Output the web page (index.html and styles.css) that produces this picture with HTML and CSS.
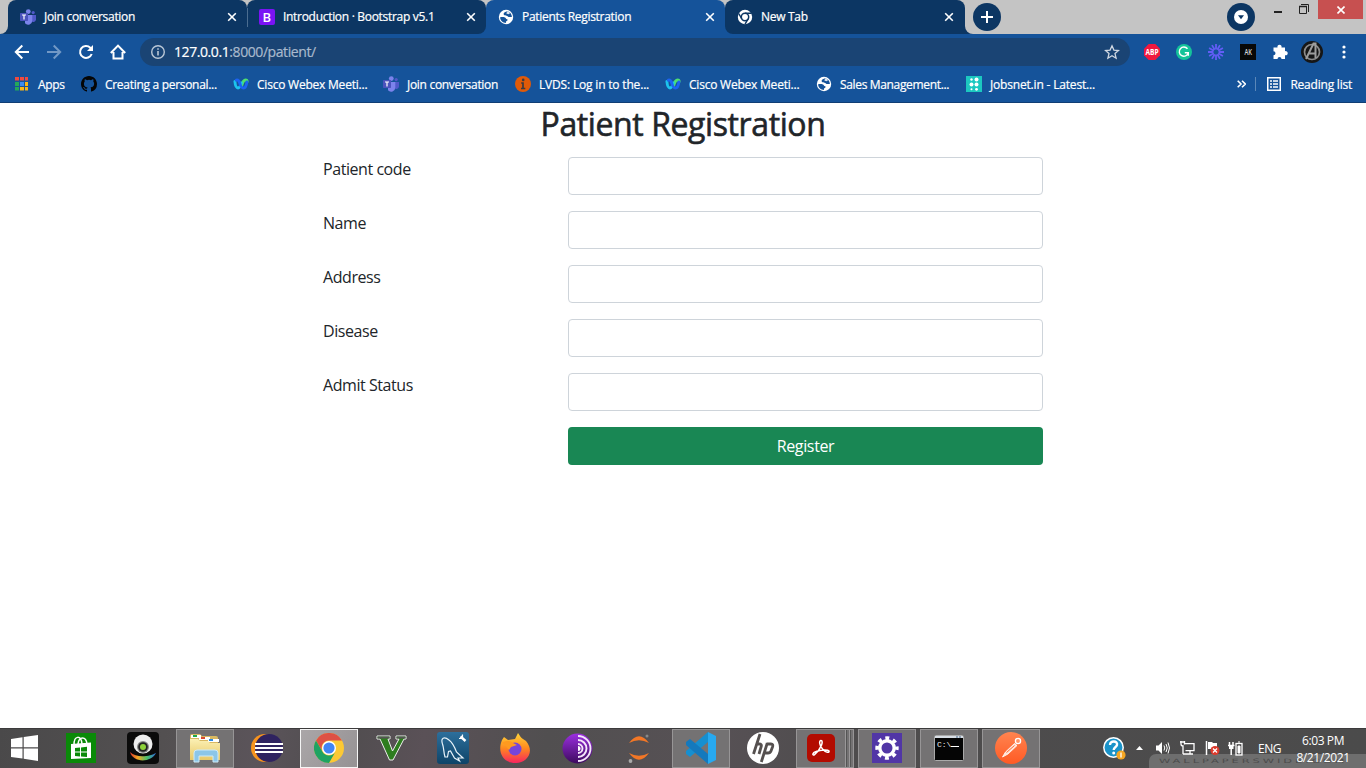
FILE: index.html
```
<!DOCTYPE html>
<html lang="en">
<head>
<meta charset="utf-8">
<title>Patients Registration</title>
<link rel="stylesheet" href="styles.css">
</head>
<body>
<svg class="defs" width="0" height="0">
  <defs>
    <linearGradient id="gFolder" x1="0" y1="0" x2="0" y2="1"><stop offset="0" stop-color="#fbf0b4"/><stop offset="1" stop-color="#e8c867"/></linearGradient>
    <linearGradient id="gFox" x1="0" y1="0" x2="0" y2="1"><stop offset="0" stop-color="#ffd53a"/><stop offset=".5" stop-color="#ff8a1e"/><stop offset="1" stop-color="#f8245f"/></linearGradient>
    <linearGradient id="gTor" x1="0" y1="0" x2="0" y2="1"><stop offset="0" stop-color="#9b2fe0"/><stop offset="1" stop-color="#3d0a5e"/></linearGradient>
    <linearGradient id="gSql" x1="0" y1="0" x2="0" y2="1"><stop offset="0" stop-color="#2d6f9c"/><stop offset="1" stop-color="#0e4468"/></linearGradient>
    <linearGradient id="gPost" x1="0" y1="0" x2="0" y2="1"><stop offset="0" stop-color="#ff8450"/><stop offset="1" stop-color="#ff5a24"/></linearGradient>
    <linearGradient id="gCam" x1="0" y1="0" x2="1" y2="0"><stop offset="0" stop-color="#d8332a"/><stop offset=".3" stop-color="#f7a823"/><stop offset=".65" stop-color="#4cc06a"/><stop offset="1" stop-color="#2f6fe0"/></linearGradient>
    <symbol id="teams" viewBox="0 0 16 16">
      <circle cx="8.3" cy="2.6" r="2.4" fill="#7b83eb"/><circle cx="13.2" cy="3.6" r="1.6" fill="#5059c9"/>
      <path d="M11 6h5v4.500a2.700 2.700 0 0 1-5 1.200z" fill="#5059c9"/>
      <path d="M5 6h7.300v5.500a4.200 4.200 0 0 1-7.300 2.800z" fill="#7b83eb"/>
      <rect x="0" y="4" width="8" height="8" rx=".7" fill="#4b53bc"/>
      <path d="M2 6h4M4 6v4.500" stroke="#fff" stroke-width="1.200" fill="none"/>
    </symbol>
    <symbol id="globe" viewBox="0 0 16 16">
      <circle cx="8" cy="8" r="7.200" fill="#fff"/>
      <path d="M9.200 2.200C7.500 2.600 5.600 3.600 5.600 5c0 1.700 3 1.200 4 2.200.8.900 2.200 1 4.300.8C13.900 5 11.800 2.700 9.200 2.200z" fill="#15539a"/>
      <path d="M2.100 8.200c1.800-.2 4.300-.6 5.300.5.700.8.600 1.400 1.600 1.500 1 .2.700 1.400-.2 1.700-1 .3-1 1.300-.7 2-3.400 0-5.900-2.600-6-5.700z" fill="#15539a"/>
      <path d="M9.300 2.300 8.300 4.400 10.500 5.200 12 4.300 11.200 3z" fill="#fff" opacity=".85"/>
    </symbol>
    <symbol id="webex" viewBox="0 0 16 16">
      <path d="M8.500 10C9.500 6.500 10.300 4 12.500 4c1.300 0 1.600.7 1.600 1.500" fill="none" stroke="#4fe070" stroke-width="3" stroke-linecap="round"/>
      <path d="M1.900 5.500C2.200 9 3 12 5 12s2.600-2.700 3.300-5" fill="none" stroke="#1cc4ee" stroke-width="2.900" stroke-linecap="round"/>
      <path d="M3.300 4.200C5 3.600 6 4.600 6.700 7c.8 3 1.700 5 3.800 5 2 0 3-3 3.400-6" fill="none" stroke="#1c63f2" stroke-width="2.900" stroke-linecap="round"/>
    </symbol>
    <symbol id="close" viewBox="0 0 10 10"><path d="M1.200 1.200l7.600 7.600M8.800 1.200L1.200 8.800" stroke="#fff" stroke-width="1.600"/></symbol>
  </defs>
</svg>

<header class="browser">
  <div class="tabstrip">
    <div class="lead"></div>
    <div class="tab first"><svg class="fav"><use href="#teams"/></svg><span>Join conversation</span><svg class="x"><use href="#close"/></svg></div>
    <div class="joint"><div class="tab second"><svg class="fav" viewBox="0 0 16 16"><rect width="16" height="16" rx="2" fill="#7a13f5"/><text x="3.400" y="12.700" font-size="13" font-weight="600" fill="#fff">B</text></svg><span>Introduction · Bootstrap v5.1</span><svg class="x"><use href="#close"/></svg></div></div>
    <div class="tab active"><svg class="fav"><use href="#globe"/></svg><span>Patients Registration</span><svg class="x"><use href="#close"/></svg></div>
    <div class="joint"><div class="tab last"><svg class="fav" viewBox="0 0 16 16"><circle cx="8" cy="8" r="7.200" fill="#fff"/><circle cx="8" cy="8" r="3.700" fill="none" stroke="#0c3663" stroke-width="1.500"/><path d="M8 4.300h6.500M4.800 9.800 1.700 4.500M11.200 9.900 8 15.200" stroke="#0c3663" stroke-width="1.400"/></svg><span>New Tab</span><svg class="x"><use href="#close"/></svg></div></div>
    <div class="trail"></div>
    <div class="round plus"><svg width="12" height="12"><path d="M6 0v12M0 6h12" stroke="#fff" stroke-width="2"/></svg></div>
    <div class="round search"><svg width="14" height="14"><circle cx="7" cy="7" r="7" fill="#fff"/><path d="M4 5.200h6L7 9.200z" fill="#0c3663"/></svg></div>
    <div class="winctl">
      <svg class="min" width="8" height="2"><rect width="8" height="2" fill="#222"/></svg>
      <svg class="restore" width="10" height="10"><path d="M.5 2.500h7v7h-7zM2 .5h7.500V8" fill="none" stroke="#222"/><path d="M0 2.500h8" stroke="#222" stroke-width="1.500"/></svg>
      <div class="shut"><svg width="8" height="8"><path d="M.5.5l7 7M7.500.5l-7 7" stroke="#fff" stroke-width="1.600"/></svg></div>
    </div>
  </div>

  <div class="toolbar">
    <div class="nav">
      <svg width="16" height="16"><path d="M15 8H2M8.300 1.500 1.800 8l6.500 6.500" fill="none" stroke="#fff" stroke-width="2"/></svg>
      <svg width="16" height="16"><path d="M1 8h13M7.700 1.500 14.200 8l-6.500 6.500" fill="none" stroke="#7298c5" stroke-width="2"/></svg>
      <svg width="16" height="16"><path d="M13.700 10A6 6 0 1 1 12.300 3.700l2 2" fill="none" stroke="#fff" stroke-width="2"/><path d="M15 1v6H9z" fill="#fff"/></svg>
      <svg width="16" height="16"><path d="M3.500 8v6.500h9V8M.8 9 8 1.600 15.200 9" fill="none" stroke="#fff" stroke-width="2"/></svg>
    </div>
    <div class="omnibox">
      <svg width="16" height="16"><circle cx="8" cy="8" r="6.300" fill="none" stroke="#bac7d6" stroke-width="1.400"/><path d="M8 7v4.500M8 4.200v1.600" stroke="#bac7d6" stroke-width="1.600"/></svg>
      <span class="url">127.0.0.1<i>:8000/patient/</i></span>
      <svg class="star" width="16" height="16"><path d="M8 1.800l1.900 4.300 4.600.4-3.500 3.100 1.100 4.600L8 11.800l-4.100 2.400L5 9.600 1.500 6.500l4.600-.4z" fill="none" stroke="#d0d8e2" stroke-width="1.300"/></svg>
    </div>
    <div class="exts">
      <svg class="abp" viewBox="0 0 16 16"><path d="M4.700 0h6.600L16 4.700v6.600L11.300 16H4.700L0 11.300V4.700z" fill="#f0183f"/><text x="1.500" y="10.800" font-size="8" font-weight="700" fill="#fff" textLength="13" lengthAdjust="spacingAndGlyphs">ABP</text></svg>
      <svg viewBox="0 0 16 16"><circle cx="8" cy="8" r="8" fill="#15c39a"/><path d="M11.500 4.800A4.600 4.600 0 1 0 12.300 9M8.800 8.700h3.500v3" fill="none" stroke="#fff" stroke-width="1.400"/></svg>
      <svg viewBox="0 0 16 16"><path d="M8 0v5.500M8 10.500V16M0 8h5.500M10.500 8H16M4 1.100l2.700 4.700M9.300 10.200l2.700 4.700M12 1.100 9.300 5.800M6.700 10.200 4 14.900M1.100 4l4.700 2.700M10.200 9.300l4.700 2.700M1.100 12l4.700-2.700M10.200 6.700 14.900 4" stroke="#625df5" stroke-width="1.800"/></svg>
      <svg viewBox="0 0 16 16"><rect width="16" height="16" fill="#080808"/><text x="4.400" y="11" font-size="8" font-weight="600" fill="#ddd" textLength="7.500" lengthAdjust="spacingAndGlyphs">AK</text></svg>
      <svg viewBox="0 0 16 16"><path d="M1.500 3.500h4a2.100 2.100 0 1 1 4 0H13v3.700a2.100 2.100 0 1 1 0 4V15H9.500a2 2 0 0 0-4 0h-4v-3.800a2 2 0 1 0 0-4z" fill="#fff"/></svg>
      <svg class="avatar" viewBox="0 0 22 22"><circle cx="11" cy="11" r="11" fill="#161616"/><circle cx="11" cy="11" r="7.500" fill="none" stroke="#8b8b8b" stroke-width="1.700"/><path d="M5 18 12.500 2.500h2V17M8 12.500h6" fill="none" stroke="#9d9d9d" stroke-width="2"/></svg>
      <svg class="dots" viewBox="0 0 4 16"><circle cx="2" cy="3" r="1.600" fill="#fff"/><circle cx="2" cy="8" r="1.600" fill="#fff"/><circle cx="2" cy="13" r="1.600" fill="#fff"/></svg>
    </div>
  </div>

  <nav class="bookmarks">
    <a><svg viewBox="0 0 16 16"><path d="M1 1h4v3.500H1zM6 1h4v3.500H6zM11 1h3v3.500h-3z" fill="#ef4a40"/><path d="M1 6h4v4H1zM1 11h4v3.500H1z" fill="#24a85a"/><path d="M6 6h4v4H6z" fill="#3b8bf0"/><path d="M11 6h3v4h-3zM6 11h4v3.500H6zM11 11h3v3.500h-3z" fill="#f8b516"/></svg><span class="b0">Apps</span></a>
    <a><svg viewBox="0 0 16 16"><path fill="#050505" d="M8 0C3.580 0 0 3.580 0 8c0 3.540 2.290 6.530 5.470 7.590.4.070.55-.17.55-.38 0-.19-.01-.82-.01-1.490-2.010.37-2.530-.49-2.690-.94-.09-.23-.48-.94-.82-1.130-.28-.15-.68-.52-.01-.53.63-.01 1.080.58 1.230.82.72 1.210 1.870.87 2.330.66.07-.52.28-.87.51-1.070-1.780-.2-3.640-.89-3.640-3.950 0-.87.31-1.590.82-2.150-.08-.2-.36-1.020.08-2.120 0 0 .67-.21 2.200.82a7.600 7.600 0 0 1 4 0c1.530-1.040 2.200-.82 2.200-.82.44 1.100.16 1.920.08 2.120.51.56.82 1.270.82 2.150 0 3.070-1.870 3.750-3.650 3.950.29.25.54.73.54 1.480 0 1.070-.01 1.930-.01 2.200 0 .21.15.46.55.38A8.010 8.010 0 0 0 16 8c0-4.420-3.580-8-8-8z"/></svg><span class="b1">Creating a personal...</span></a>
    <a><svg><use href="#webex"/></svg><span class="b2">Cisco Webex Meeti...</span></a>
    <a><svg><use href="#teams"/></svg><span class="b3">Join conversation</span></a>
    <a><svg viewBox="0 0 16 16"><circle cx="8" cy="8" r="8" fill="#e05a08"/><path d="M8 6.500v6M6.200 7h2.500M6 12.500h4.300" stroke="#3b3a40" stroke-width="1.700"/><circle cx="8.200" cy="3.900" r="1.300" fill="#3b3a40"/></svg><span class="b4">LVDS: Log in to the...</span></a>
    <a><svg><use href="#webex"/></svg><span class="b5">Cisco Webex Meeti...</span></a>
    <a><svg><use href="#globe"/></svg><span class="b6">Sales Management...</span></a>
    <a><svg viewBox="0 0 16 16"><rect width="16" height="16" fill="#1cc8c0"/><g fill="#fff"><circle cx="5.500" cy="3.500" r="1.200"/><circle cx="10.500" cy="3.500" r="2"/><circle cx="5.500" cy="8.500" r="2"/><circle cx="10.500" cy="8.500" r="2"/><circle cx="5.500" cy="13.300" r="1"/><circle cx="10.500" cy="13.300" r="1.400"/></g></svg><span class="b7">Jobsnet.in - Latest...</span></a>
    <div class="right">
      <svg class="more" viewBox="0 0 9 8"><path d="M.7.7 4 4 .7 7.300M5 .7 8.300 4 5 7.300" fill="none" stroke="#fff" stroke-width="1.600"/></svg>
      <svg class="list" viewBox="0 0 14 14"><rect x=".75" y=".75" width="12.500" height="12.500" fill="none" stroke="#fff" stroke-width="1.500"/><path d="M3 4h2M6 4h5M3 7h2M6 7h5M3 10h2M6 10h5" stroke="#fff" stroke-width="1.500"/></svg>
      <span class="b8">Reading list</span>
    </div>
  </nav>
</header>

<main class="page">
  <h2>Patient Registration</h2>
  <form class="form">
    <label>Patient code</label><input type="text">
    <label>Name</label><input type="text">
    <label>Address</label><input type="text">
    <label>Disease</label><input type="text">
    <label>Admit Status</label><input type="text">
    <button type="button">Register</button>
  </form>
</main>

<footer class="taskbar">
  <div class="start"><svg width="27" height="26" viewBox="0 0 27 26"><path d="M0 4 11.500 2.200V12.300H0zM12.700 2 27 0V12.300H12.700zM0 13.500h11.500v10L0 21.900zM12.700 13.500H27V26l-14.300-2.200z" fill="#fff"/></svg></div>
  <div class="app"><svg width="30" height="30"><rect width="30" height="30" fill="#0a8a08"/><path d="M5 12l20-1.500V26L5 27z" fill="#fff" transform="translate(0 -1)"/><path d="M8 12C8 2 15 2 16 11M12 11C13 3 20 3 21 11" fill="none" stroke="#fff" stroke-width="1.500"/><path d="M9 15l5-.5v4H9zM15 14.400l6-.6v4.700h-6zM9 19.500h5v4l-5-.4zM15 19.500h6v4.400l-6-.4z" fill="#0a8a08"/></svg></div>
  <div class="app"><svg width="32" height="32"><rect width="32" height="32" rx="4" fill="#0b0b0b"/><path d="M3 20c3 11 21 11 26 1-5 3-19 6-26-1z" fill="url(#gCam)"/><circle cx="16" cy="12" r="9.500" fill="#eee"/><circle cx="16" cy="15" r="6" fill="#888"/><circle cx="16" cy="15" r="4.800" fill="#222"/><circle cx="16" cy="15" r="3" fill="#8dd13a"/></svg></div>
  <div class="app open"><svg width="32" height="30"><path d="M1 3q0-2 2-2h8l2 2h14q2 0 2 2v20H1z" fill="#d8b861"/><path d="M2 2h10v3H2z" fill="#fff"/><path d="M4 2h4v2H4z" fill="#20a84a"/><path d="M10 4h11v3H10z" fill="#fff"/><path d="M12 4h4v2h-4z" fill="#d84a32"/><path d="M19 6h11v3H19z" fill="#fff"/><path d="M20 6h4v2h-4z" fill="#2d8be0"/><path d="M1 6h8l2 2h8l2 2h10v17H1z" fill="url(#gFolder)"/><path d="M5 29V20q0-3 3-3h18q3 0 3 3v9h-5v-6H10v6z" fill="#8cc6e8" stroke="#cdeaf8"/></svg></div>
  <div class="app"><svg width="32" height="30"><circle cx="14" cy="15" r="14" fill="#f7941e"/><circle cx="18" cy="15" r="14" fill="#2f2360"/><path d="M4 11h28M4 15h28M4 19h28" stroke="#fff" stroke-width="2"/></svg></div>
  <div class="app focus"><svg width="30" height="30" viewBox="0 0 30 30"><circle cx="15" cy="15" r="15" fill="#fcc934"/><path d="M2 7.500A15 15 0 0 1 28 7.500H15a7.500 7.500 0 0 0-6.500 11.200z" fill="#de5145"/><path d="M2 7.500A15 15 0 0 0 15 30l6.500-11.300a7.500 7.500 0 0 1-13 0z" fill="#1ea362"/><circle cx="15" cy="15" r="7" fill="#fff"/><circle cx="15" cy="15" r="5.600" fill="#4285f4"/></svg></div>
  <div class="app"><svg width="31" height="26"><path d="M1 1h13v3h-2l4.500 12L23 4h-3V1h10v3h-2L17 25h-3.500L4 4H1z" fill="#2e7d1f" stroke="#eee" stroke-width="1"/><path d="M1.500 1.500h12v2h-12zM20.500 1.500h9v2h-9z" fill="#555"/></svg></div>
  <div class="app"><svg width="32" height="32"><rect width="32" height="32" rx="3" fill="url(#gSql)"/><path d="M8 25C6.500 20 7 16 5.500 12 3.500 6 7 4 12 8c4 3 6 8 7.500 12l6.500 6h-5l1.500 3-5-3-4-7-2 .5-1 5.500z" fill="none" stroke="#e8f3fa" stroke-width="1.200"/><path d="M23.500 4.500l5 4.500" stroke="#fff" stroke-width="2.400" fill="none"/><path d="M25.500 2.500v4h-3.500" stroke="#fff" stroke-width="1.200" fill="none"/></svg></div>
  <div class="app"><svg width="32" height="32"><path d="M3 8 5 5l4 3 7-1 3-6c2 3 3 5 5 6l3 2c10 12-1 23-11 22C4 31-2 20 3 8z" fill="url(#gFox)"/><circle cx="16" cy="17" r="6.500" fill="#7645d9"/><path d="M3 11c4-3 9-2 11 0l4 2-6 2-2 3c-2-2-2-4-7-7z" fill="#ff9a1f"/></svg></div>
  <div class="app"><svg width="31" height="31"><circle cx="15.500" cy="15.500" r="15" fill="url(#gTor)"/><path d="M16 3a12.500 12.500 0 0 1 0 25M16 7a8.500 8.500 0 0 1 0 17M16 11a4.500 4.500 0 0 1 0 9" stroke="#f4e6fa" stroke-width="1.900" fill="none"/><path d="M16 13a2.500 2.500 0 0 1 0 5z" fill="#fff"/></svg></div>
  <div class="app"><svg width="24" height="30"><path d="M2 10Q12-3.500 22 10 12 4.500 2 10zM2 20q10 13.500 20 0-10 5.500-20 0z" fill="#f37726"/><circle cx="20" cy="3" r="1.500" fill="#888"/><circle cx="3.500" cy="28" r="1.900" fill="#aaa"/></svg></div>
  <div class="app open"><svg width="32" height="32"><path d="M23 0v10L5 25l-4-3v-3z" fill="#168fd0"/><path d="M1 10l4-3 18 15v10L1 13z" fill="#1479bd"/><path d="M23 0l8 4v24l-8 4z" fill="#27a9f0"/></svg></div>
  <div class="app"><svg width="32" height="32"><circle cx="16" cy="16" r="16" fill="#fff"/><path d="M13 2 6.500 22M9.500 12h2.700q2.800 0 2 2.500L12 22M20.300 11l-6 19M20 12h4q2.500 0 1.500 3l-1.500 4q-.8 2-3 2h-3.500" fill="none" stroke="#55504f" stroke-width="2.800"/></svg></div>
  <div class="app open stack"><svg width="28" height="28"><rect width="28" height="28" rx="5" fill="#b30b00"/><path d="M14 6.500c3 0 0 9-6.500 14.200-2.400 1-2.400-1.900 1.500-3.200 5.500-2 12-2 13-.5.700 2-3 2-6.500-2C12 11 12 6.500 14 6.500z" fill="none" stroke="#fff" stroke-width="1.500"/></svg></div>
  <div class="app open"><svg width="30" height="30"><rect width="30" height="30" fill="#5136a6"/><circle cx="15" cy="15" r="7.200" fill="none" stroke="#fff" stroke-width="3.400"/><circle cx="15" cy="15" r="9.900" fill="none" stroke="#fff" stroke-width="3.600" stroke-dasharray="3.900 3.870" stroke-dashoffset="1.950"/></svg></div>
  <div class="app open"><svg width="30" height="26"><rect x=".5" y=".5" width="29" height="25" rx="1" fill="#050505" stroke="#aaa"/><path d="M1 1h28v2H1z" fill="#d8dee5"/><path d="M22 2h2M25 2h2" stroke="#47688d"/><text x="3" y="12" class="mono" font-size="8" fill="#eee">C:\</text><path d="M17 11.500h8" stroke="#fff"/></svg></div>
  <div class="app open"><svg width="32" height="32"><circle cx="16" cy="16" r="16" fill="url(#gPost)"/><path d="M7.500 25l3-5 9-8.500 2.500 2L13 22z" fill="#ffe3d6" stroke="#fff" stroke-width=".8"/><circle cx="23" cy="9" r="2.600" fill="#ff9469" stroke="#fff" stroke-width="1.300"/><path d="M11.500 20.500l8-7" stroke="#ff6c37"/></svg></div>

  <div class="wm"><span>WALLPAPERSWIDE.COM</span></div>
  <div class="tray">
    <svg class="help" width="23" height="23"><circle cx="10.500" cy="10.500" r="9.700" fill="#1b93c9" stroke="#fff" stroke-width="1.500"/><path d="M7 8c0-5 8-4.500 7 0-.4 2-3.300 2.200-3.300 5" fill="none" stroke="#fff" stroke-width="2.400"/><circle cx="10.700" cy="16" r="1.500" fill="#fff"/><circle cx="18" cy="18" r="4.600" fill="#f5a623"/><path d="M18 15.500v5" stroke="#fff" stroke-width="1.300"/></svg>
    <svg class="up" width="7" height="4"><path d="M0 4 3.500 0 7 4z" fill="#fff"/></svg>
    <svg class="snd" width="15" height="14"><path d="M1 4.500h2.500L7 1v12L3.500 9.500H1z" fill="#fff"/><path d="M9 4.500q1.500 2.500 0 5M11 3q2.500 4 0 8M13 1.500q3 5.500 0 11" fill="none" stroke="#fff"/></svg>
    <svg class="net" width="15" height="14"><path d="M5 2.700h9v7H5.500M7 13h6M10 10v3M1 0v3q0 2 2 2V13M4.500 0v3.500M0 1h5M3 13h4" fill="none" stroke="#fff" stroke-width="1.300"/></svg>
    <svg class="flag" width="16" height="15"><path d="M1.500 0v14" stroke="#fff" stroke-width="1.500"/><path d="M3 1h4l1 1h4v7H8L7 8H3z" fill="#fff"/><circle cx="10" cy="9.500" r="4.500" fill="#dc3a2c"/><path d="M8 7.500l4 4M12 7.500l-4 4" stroke="#fff" stroke-width="1.300"/></svg>
    <svg class="bat" width="15" height="15"><rect x="8" y="2.500" width="6" height="11.500" fill="none" stroke="#fff" stroke-width="1.300"/><path d="M10 1h2M10 5h2v7h-2z" stroke="#fff" fill="#fff"/><path d="M1.500 1v3M5 1v3M0 4.500h6.500M3.200 5v9" stroke="#fff" stroke-width="1.500" fill="none"/><path d="M1 5h4.500v3H1z" fill="#fff"/></svg>
    <span class="lang">ENG</span>
    <div class="clock"><span>6:03 PM</span><span>8/21/2021</span></div>
  </div>
</footer>
</body>
</html>
```
FILE: styles.css
```
* { box-sizing: border-box; }
body { margin: 0; width: 1366px; height: 768px; overflow: hidden; display: flex; flex-direction: column; background: #fff; font-family: "Open Sans", "Noto Sans", sans-serif; color: #212529; }
svg { flex: none; display: block; }
.defs { position: absolute; }

.browser { flex: none; height: 103px; background: #15539a; border-bottom: 1px solid #103e74; color: #fff; font-size: 12px; }
.browser span { white-space: nowrap; flex: none; -webkit-text-stroke: .2px currentColor; }
.tabstrip { display: flex; height: 34px; background: #c4c4c4; }
.lead, .trail { width: 8px; flex: none; background: #0c3663; }
.lead::before, .trail::before { content: ""; display: block; height: 34px; background: #c4c4c4; border-radius: 0 0 8px 0; }
.trail::before { border-radius: 0 0 0 8px; }
.joint { flex: none; background: linear-gradient(#c4c4c4 17px, #15539a 17px); }
.tab { flex: none; width: 239px; height: 34px; display: flex; align-items: center; background: #0c3663; border-radius: 8px 8px 0 0; padding-left: 12px; }
.tab .fav { width: 16px; height: 16px; margin-right: 8px; }
.tab .x { width: 10px; height: 10px; margin-left: auto; margin-right: 10px; }
.tab span { letter-spacing: -.3px; padding-bottom: 1px; }
.second { position: relative; border-radius: 8px 8px 8px 0; }
.second::before { content: ""; position: absolute; left: 0; top: 8px; width: 1px; height: 19px; background: #4b6d90; }
.active { background: #15539a; }
.last { border-radius: 8px 8px 0 8px; width: 240px; }
.last .x { margin-right: 11px; }
.round { flex: none; width: 28px; height: 28px; margin-top: 3px; border-radius: 50%; background: #0c3663; display: grid; place-items: center; }
.search { margin-left: 226px; }
.winctl { display: flex; align-items: flex-start; margin-left: 19px; }
.min { margin-top: 11px; }
.restore { margin: 4px 9px 0 17px; }
.shut { width: 45px; height: 19px; background: #c75050; display: grid; place-items: center; }

.toolbar { display: flex; align-items: center; height: 36px; }
.nav { width: 140px; padding-left: 14px; display: flex; gap: 16px; }
.omnibox { width: 990px; height: 28px; border-radius: 14px; background: #1a4474; display: flex; align-items: center; padding: 0 10px; gap: 8px; }
.url { font-size: 14px; letter-spacing: -.42px; color: #fff; padding-bottom: 1px; }
.url i { font-style: normal; color: #a9bacd; }
.star { margin-left: auto; }
.exts { display: flex; align-items: center; gap: 16px; padding-left: 14px; }
.exts svg { width: 16px; height: 16px; }
.exts .abp { overflow: visible; }
.exts .avatar { width: 22px; height: 22px; margin: 0 4px 0 -3px; }
.exts .dots { width: 4px; margin-left: -1px; }

.bookmarks { display: flex; align-items: center; height: 28px; padding-left: 14px; gap: 16px; }
.bookmarks a { display: flex; align-items: center; gap: 8px; flex: none; }
.bookmarks a svg { width: 16px; height: 16px; }
.bookmarks a span { display: block; letter-spacing: -.3px; }
.bookmarks .b0 { width: 27px; }
.bookmarks .b1 { width: 112px; }
.bookmarks .b2, .bookmarks .b4, .bookmarks .b6 { width: 110px; }
.bookmarks .b5 { width: 111px; }
.bookmarks .b3 { width: 92px; }
.bookmarks .b7 { width: 106px; }
.bookmarks a .b2, .bookmarks a .b5 { letter-spacing: -.22px; }
.bookmarks a .b4, .bookmarks a .b7 { letter-spacing: -.18px; }
.bookmarks a .b6 { letter-spacing: -.34px; }
.right { display: flex; align-items: center; margin-left: auto; padding-right: 14px; }
.more { width: 9px; height: 8px; margin-right: 9px; }
.list { width: 26px; height: 14px; padding-left: 11px; border-left: 1px solid #5b87b8; margin-right: 9px; }
.b8 { letter-spacing: -.22px; }

.page { flex: 1; }
.page h2 { margin: 2px 0 0; font-size: 32px; line-height: 38px; font-weight: 500; text-align: center; letter-spacing: -.4px; -webkit-text-stroke: .6px #212529; }
.form { width: 720px; margin: 14px 0 0 323px; display: grid; grid-template-columns: 245px 475px; grid-auto-rows: 38px; row-gap: 16px; }
.form label { font-size: 16px; line-height: 25px; letter-spacing: -.44px; }
.form input { width: 475px; height: 38px; border: 1px solid #ced4da; border-radius: 4px; padding: 6px 12px; background: #fff; outline: none; }
.form button { grid-column: 2; border: 0; border-radius: 4px; background: #198754; color: #fff; font: 16px "Open Sans", sans-serif; letter-spacing: -.36px; }

.taskbar { flex: none; height: 40px; display: flex; align-items: stretch; position: relative; box-shadow: inset 0 1px #3c3b3c; background: linear-gradient(100deg, #4a494a 0, #535051 12%, #5b545a 19%, #504d4f 25%, #5a5157 31%, #514f50 40%, #575155 52%, #4e4c4d 62%, #4b4b4b 100%); color: #fff; gap: 4px; }
.start { width: 48px; display: grid; place-items: center; }
.app { width: 58px; flex: none; display: grid; place-items: center; }
.open, .focus { margin-top: 1px; padding-bottom: 1px; }
.open { background: #747273; border: 1px solid #979596; }
.focus { background: linear-gradient(120deg, #aaa6a8, #969294); border: 1px solid #f5f5f5; }
.stack { padding-right: 8px; background: linear-gradient(90deg, #747273 48px, #9a9899 48px, #9a9899 49px, #555 49px, #555 50px, #747273 50px, #747273 52px, #9a9899 52px, #9a9899 53px, #555 53px, #555 54px, #747273 54px); }
.mono { font-family: "Liberation Mono", monospace; }
.wm { position: absolute; left: 1149px; top: 26px; width: 217px; height: 14px; padding-left: 10px; background: #6e6e6e; border-radius: 7px 0 0 0; color: #4c4c4c; font: 400 6px/14px "DejaVu Sans", sans-serif; white-space: nowrap; }
.wm span { display: inline-block; letter-spacing: 1.55px; transform: scaleX(1.9); transform-origin: 0 50%; }
.tray { margin-left: auto; width: 264px; display: flex; align-items: center; position: relative; font-size: 12px; }
.help { margin-right: 10px; margin-left: 1px; }
.up { margin-right: 12px; }
.snd, .net { margin-right: 10px; }
.flag { margin-right: 7px; }
.bat { margin-right: 15px; }
.lang { letter-spacing: -.5px; width: 24px; }
.clock { flex: 1; display: flex; flex-direction: column; align-items: center; line-height: 17px; padding: 1px 2px 0 0; letter-spacing: -.4px; }
```
